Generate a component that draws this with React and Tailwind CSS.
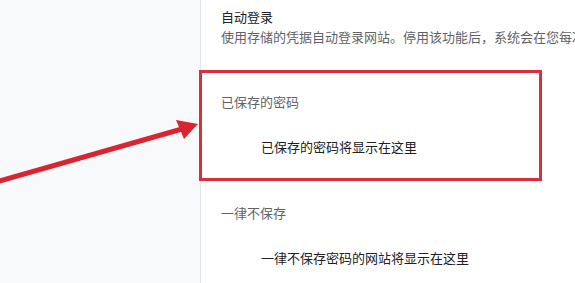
const font = { fontFamily: '"Noto Sans CJK SC", "Noto Sans", sans-serif' };

function Section({ title, empty }) {
  return (
    <div>
      <div className="h-5 leading-5 text-[13px] text-[#5f6368]">{title}</div>
      <div className="mt-[25px] h-5 pl-10 leading-5 text-[13px] text-[#202124]">{empty}</div>
    </div>
  );
}

export default function App() {
  return (
    <div
      className="relative flex h-[283px] w-[575px] overflow-hidden bg-white"
      style={font}
    >
      <aside className="w-[201px] shrink-0 border-r border-[#e3e4e6] bg-[#f8f9fa]" />

      <main className="min-w-0 flex-1 pl-[20px] pt-[7px]">
        <div className="h-5 leading-5 text-[13px] text-[#202124]">自动登录</div>
        <div className="h-5 whitespace-nowrap leading-5 text-[13px] text-[#5f6368]">
          使用存储的凭据自动登录网站。停用该功能后，系统会在您每次登录网站时要求您进行确认。
        </div>

        <div className="mt-[45px]">
          <Section title="已保存的密码" empty="已保存的密码将显示在这里" />
        </div>
        <div className="mt-[46px]">
          <Section title="一律不保存" empty="一律不保存密码的网站将显示在这里" />
        </div>
      </main>

      {/* annotation: red box + arrow */}
      <div className="pointer-events-none absolute left-[199px] top-[70px] h-[111px] w-[343px] border-[3px] border-[#d7303b]" />
      <svg
        className="pointer-events-none absolute left-0 top-0"
        width="575"
        height="283"
        viewBox="0 0 575 283"
      >
        <line x1="-4" y1="182" x2="182" y2="129" stroke="#d9252f" strokeWidth="5" />
        <polygon points="198,124 176,120 184,139" fill="#d9252f" />
      </svg>
    </div>
  );
}
